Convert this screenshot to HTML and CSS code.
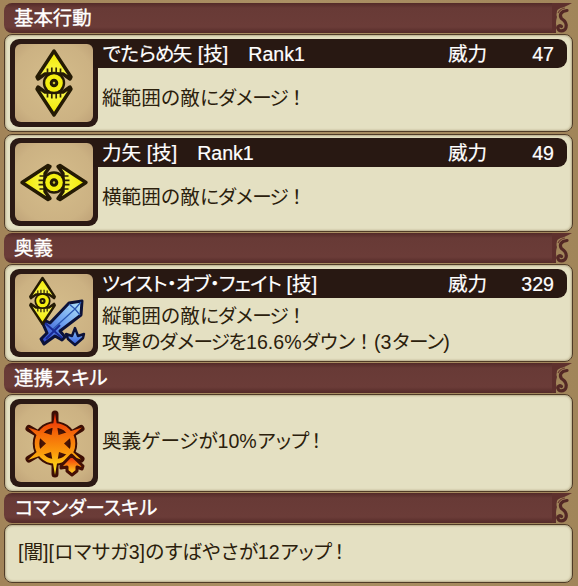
FILE: index.html
```html
<!DOCTYPE html>
<html lang="ja">
<head>
  <meta charset="UTF-8">
  <title>スキル</title>
  <link rel="stylesheet" href="styles.css">
</head>
<body>
  <svg class="defs" width="0" height="0">
    <defs>
      <linearGradient id="blade" x1="1" y1="0" x2="0" y2="1">
        <stop offset="0" stop-color="#b5e8fa"/>
        <stop offset=".5" stop-color="#6c9eee"/>
        <stop offset="1" stop-color="#263bc4"/>
      </linearGradient>
      <linearGradient id="down" x1="0" y1="0" x2="0" y2="1">
        <stop offset="0" stop-color="#96d2ff"/>
        <stop offset="1" stop-color="#3157d8"/>
      </linearGradient>
      <linearGradient id="fire" gradientUnits="userSpaceOnUse" x1="0" y1="12" x2="0" y2="76">
        <stop offset="0" stop-color="#e81808"/>
        <stop offset=".35" stop-color="#f46808"/>
        <stop offset=".65" stop-color="#fb9a0c"/>
        <stop offset="1" stop-color="#fff01c"/>
      </linearGradient>
      <linearGradient id="up" x1="0" y1="0" x2="0" y2="1">
        <stop offset="0" stop-color="#f02008"/>
        <stop offset=".6" stop-color="#fb9414"/>
        <stop offset="1" stop-color="#fee030"/>
      </linearGradient>
      <linearGradient id="gold" x1="0" y1="0" x2="0" y2="1">
        <stop offset="0" stop-color="#f1e800"/>
        <stop offset="1" stop-color="#fbfb58"/>
      </linearGradient>
      <g id="arrow-half">
        <path d="M0-32L-17-6L-16-4L-9-9H9L16-4L17-6Z" fill="url(#gold)" stroke="#241a04" stroke-width="3.400" stroke-linejoin="round"/>
        <path d="M-6.500-14.500v5M-2.200-15.500v5M2.200-15.500v5M6.500-14.500v5" stroke="#2c2206" stroke-width="1.700"/>
      </g>
      <g id="eye">
        <use href="#arrow-half"/>
        <use href="#arrow-half" transform="rotate(180)"/>
        <circle r="11.200" fill="#241a04"/>
        <circle r="8.800" fill="#f4ee10"/>
        <circle r="2.800" fill="#c8c030" stroke="#241a04" stroke-width="3"/>
      </g>
      <g id="curl">
        <path d="M-1 0H19Q15 2.500 10 4.500Q5 5.500 4 8Q3 12 4 14Q2 20 4 25Q2 29 -1 30Z" fill="#5e302d"/>
        <path d="M14 7.500C8 8 6 12 8.500 15.500C13 18.500 14 21 13 24.500C11.500 29 5 29 5 25C5 22.500 7.500 22 8.500 23.500" fill="none" stroke="#532825" stroke-width="3.200" stroke-linecap="round"/>
        <path d="M5 10C6.500 7 9 5.500 12 5" fill="none" stroke="#6b3a32" stroke-width="1.200"/>
      </g>
    </defs>
  </svg>

  <main class="skills">
    <h2 class="heading"><span>基本行動</span><svg class="curl" viewBox="0 0 20 30"><use href="#curl"/></svg></h2>

    <section class="panel">
      <div class="icon">
        <svg viewBox="0 0 88 88"><use href="#eye" transform="translate(44 44)"/></svg>
      </div>
      <div class="info">
        <div class="title">
          <span class="name"><span class="hira">でたらめ</span>矢 [技]<span class="rank">Rank1</span></span>
          <span class="label">威力</span><span class="power">47</span>
        </div>
        <p class="desc">縦範囲の敵<span class="hira">に</span><span class="kata">ダメージ</span>！</p>
      </div>
    </section>

    <section class="panel second">
      <div class="icon">
        <svg viewBox="0 0 88 88"><use href="#eye" transform="translate(44 44.500) rotate(-90)"/></svg>
      </div>
      <div class="info">
        <div class="title">
          <span class="name">力矢 [技]<span class="rank">Rank1</span></span>
          <span class="label">威力</span><span class="power">49</span>
        </div>
        <p class="desc">横範囲の敵<span class="hira">に</span><span class="kata">ダメージ</span>！</p>
      </div>
    </section>

    <h2 class="heading"><span>奥義</span><svg class="curl" viewBox="0 0 20 30"><use href="#curl"/></svg></h2>

    <section class="panel">
      <div class="icon">
        <svg viewBox="0 0 88 88">
          <g stroke="#0c1238" stroke-linejoin="round">
            <path d="M40 54L59 34L72 32L71 46L50 62L55 68L52 71L45 67L38 72L34 75L31 70L37 64L33 55L36 52Z" fill="url(#blade)" stroke-width="3"/>
            <path d="M42 61L65 40M59 35L65 40L70 46M65 40L71 33" fill="none" stroke="#2855b0" stroke-width="1.200"/>
            <path d="M36 70L50 56M35 54L52 69" fill="none" stroke="#182995" stroke-width="2"/>
            <path d="M65 59L68 67L74 65L73 69L65 76L58 70L56 65L62 67Z" fill="url(#down)" stroke-width="2.400"/>
          </g>
          <use href="#eye" transform="translate(32.500 32) scale(.72)"/>
        </svg>
      </div>
      <div class="info">
        <div class="title">
          <span class="name"><span class="palt">ツイスト・オブ・フェイト</span> [技]</span>
          <span class="label">威力</span><span class="power">329</span>
        </div>
        <p class="desc two">縦範囲の敵<span class="hira">に</span><span class="kata">ダメージ</span>！<br>攻撃<span class="hira">の</span><span class="kata">ダメージ</span><span class="hira">を</span>16.6%<span class="kata">ダウン</span>！(3<span class="kata">ターン</span>)</p>
      </div>
    </section>

    <h2 class="heading"><span>連携<span class="kata">スキル</span></span><svg class="curl" viewBox="0 0 20 30"><use href="#curl"/></svg></h2>

    <section class="panel">
      <div class="icon">
        <svg viewBox="0 0 88 88">
          <g fill="none" stroke="#3c0e04" stroke-linecap="round" stroke-linejoin="round">
            <circle cx="45" cy="44.500" r="18" fill="#4a1505" stroke-width="8.500"/>
            <path d="M45 15V75M19 29.500L71 60M71 29.500L19 60" stroke-width="7"/>
          </g>
          <circle cx="45" cy="44.500" r="18" fill="none" stroke="url(#fire)" stroke-width="4.600"/>
          <path d="M45 14L48.500 36L72 28.500L54 44.500L71 60.500L49 53L45 76L41 53L18 61L36 44.500L18 28.500L41.500 36Z" fill="url(#fire)"/>
          <path d="M61.500 56L73 67L72 70L67 68L67 72L62 76L57 72L57 68L51 69L51 67Z" fill="url(#up)" stroke="#451005" stroke-width="3" stroke-linejoin="round"/>
        </svg>
      </div>
      <div class="info">
        <p class="desc">奥義<span class="gauge">ゲージが</span>10%<span class="tight">アップ</span>！</p>
      </div>
    </section>

    <h2 class="heading"><span class="kata">コマンダースキル</span><svg class="curl" viewBox="0 0 20 30"><use href="#curl"/></svg></h2>

    <section class="panel commander">
      <p class="desc">[闇][<span class="saga">ロマサガ</span>3]<span class="speed">のすばやさが</span>12<span class="tight">アップ</span>！</p>
    </section>
  </main>
</body>
</html>
```
FILE: styles.css
```css
* {
  box-sizing: border-box;
}

body {
  margin: 0;
  background: linear-gradient(to right, #a28459, #ab9064 50%, #a1855a);
  font-family: "Liberation Sans", "Noto Sans CJK JP", sans-serif;
  font-size: 19.6px;
  color: #2b200c;
}

.defs {
  position: absolute;
}

.skills {
  display: flex;
  flex-direction: column;
  gap: 1px;
  padding: 3px 5px 3px 4px;
}

.heading {
  display: flex;
  justify-content: space-between;
  height: 30px;
  margin: 0;
  padding-left: 10px;
  font-size: 19.4px;
  font-weight: 400;
  line-height: 30px;
  color: #fff;
  -webkit-text-stroke: 0.35px #fff;
  background: linear-gradient(#532a28, #683a36 5px, #6b3c38 24px, #542a28) no-repeat 0 0 / 552px 30px;
  border-radius: 8px 0 0 8px;
  white-space: nowrap;
}

.heading .kata {
  letter-spacing: -1.5px;
}

.curl {
  width: 20px;
  height: 30px;
  overflow: visible;
}

.panel {
  display: flex;
  height: 98px;
  padding: 4px 5px 0;
  background: #e4e0c2;
  border: 1px solid #4f3b27;
  border-radius: 8px;
  box-shadow: inset 0 0 2px 1px #b7ac89;
}

.second {
  margin-top: 1px;
  padding-top: 3px;
}

.icon {
  flex: none;
  width: 88px;
  height: 88px;
  background: #2b1914;
  border-radius: 9px;
}

.icon svg {
  display: block;
  width: 88px;
  height: 88px;
  background: radial-gradient(#d5bd8b, #ccb283 65%, #b89a72);
  clip-path: inset(5px round 6px);
}

.info {
  flex: 1;
  display: flex;
  flex-direction: column;
  margin-left: -3px;
}

.title {
  display: flex;
  height: 29px;
  margin-left: -8px;
  padding: 0 13px 0 15px;
  line-height: 30px;
  color: #fff;
  -webkit-text-stroke: 0.2px #fff;
  background: #281812;
  border-radius: 0 9px 9px 0;
  white-space: nowrap;
}

.name {
  flex: 1;
}

.rank {
  margin-left: 20px;
}

.label {
  width: 40px;
}

.power {
  width: 66px;
  text-align: right;
}

.desc {
  flex: 1;
  margin: 0;
  padding: 17px 0 0 7px;
  line-height: 26px;
  white-space: pre;
}

.title + .two {
  padding-top: 5px;
}

.desc:only-child {
  padding-top: 29px;
}

.commander {
  height: 59px;
  padding: 0 13px;
}

.commander .desc:only-child {
  padding: 14px 0 0;
}

/* kana sit closer together than kanji */
.hira {
  letter-spacing: -1.9px;
}

.kata {
  letter-spacing: -2px;
}

.tight {
  letter-spacing: -3px;
}

.gauge {
  letter-spacing: -0.4px;
}

.saga {
  letter-spacing: -0.9px;
}

.speed {
  letter-spacing: -0.8px;
}

.palt {
  font-feature-settings: "palt";
  letter-spacing: -0.65px;
}
```
